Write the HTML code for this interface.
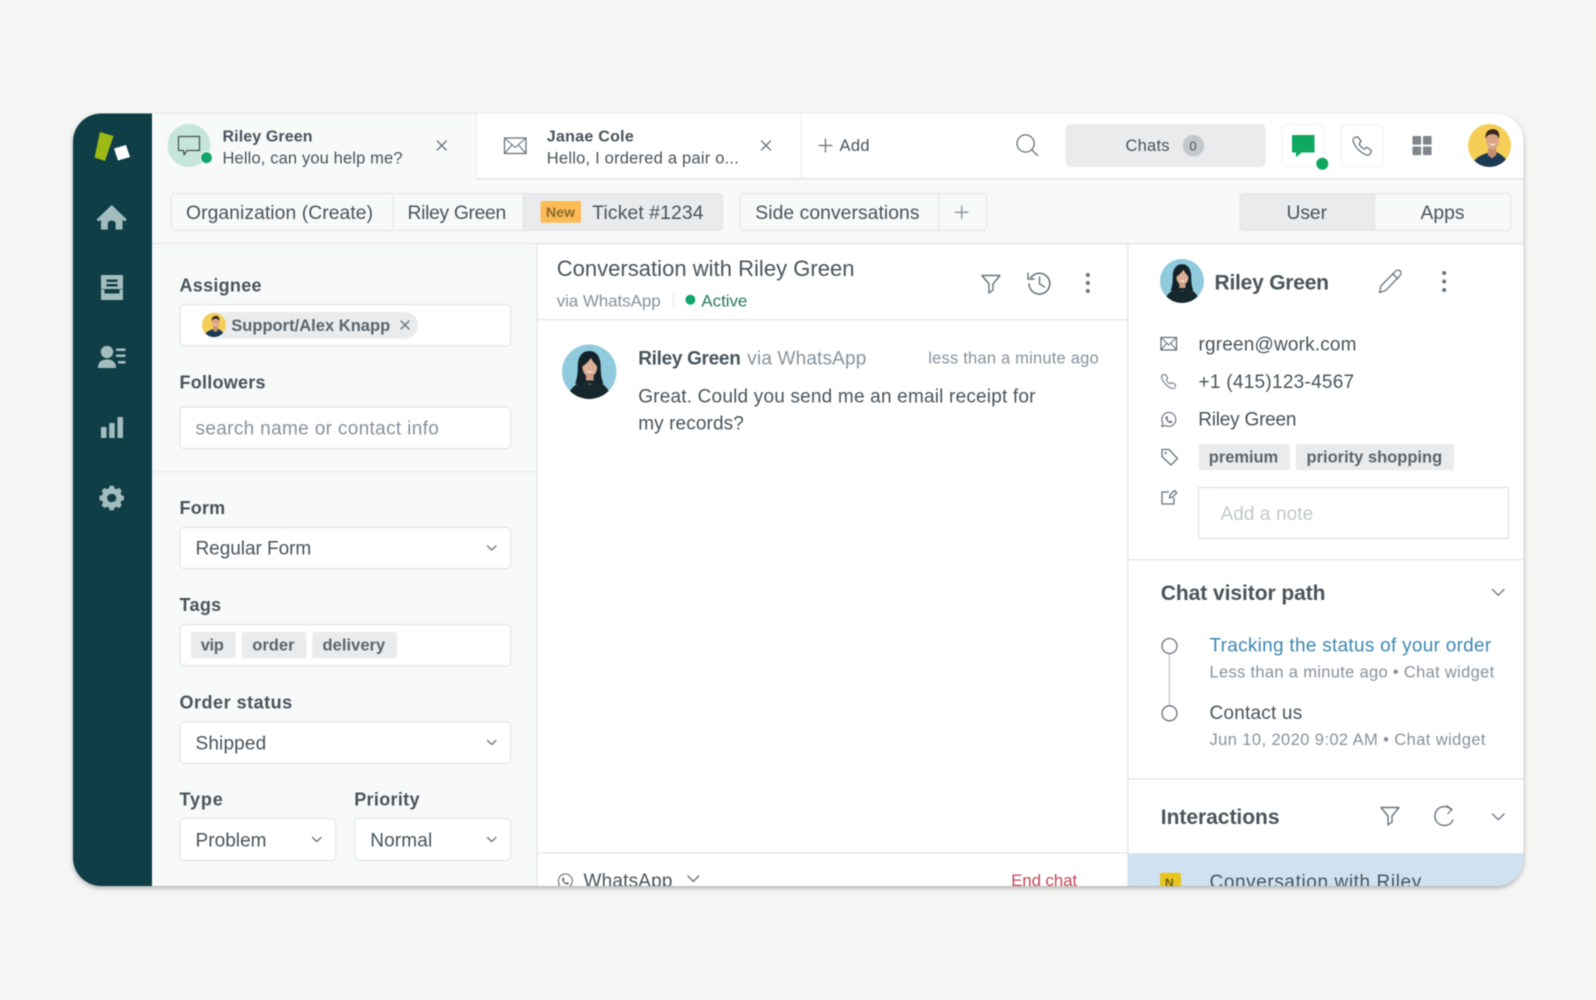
<!DOCTYPE html>
<html lang="en"><head><meta charset="utf-8"><title>Support workspace</title>
<style>
html,body{margin:0;padding:0;background:#f5f5f3;width:1596px;height:1000px;overflow:hidden}
svg{display:block;filter:blur(.4px)}
text{font-family:"Liberation Sans",Arial,sans-serif;fill:#49545c;white-space:pre;transform:translateX(-.5px)}
.b{font-weight:700}
.g{fill:#87929d}
.ln{fill:none;stroke:#68737d;stroke-width:1.3;stroke-linecap:round;stroke-linejoin:round}
.box{fill:#fff;stroke:#e3e5e6;stroke-width:1.2}
.ch{fill:none;stroke:#68737d;stroke-width:1.3;stroke-linecap:round;stroke-linejoin:round}
.nav{fill:#a3bdbf}
</style></head><body>
<svg width="1596" height="1000" viewBox="0 0 1596 1000" xmlns="http://www.w3.org/2000/svg">
<defs>
<clipPath id="card"><rect x="73" y="113.5" width="1450.5" height="772.5" rx="28"/></clipPath>
<clipPath id="av"><circle cx="50" cy="50" r="50"/></clipPath>
<filter id="sh" x="-5%" y="-5%" width="110%" height="110%"><feDropShadow dx="0" dy="2" stdDeviation="2.5" flood-color="#6d726e" flood-opacity=".55"/></filter>
<symbol id="woman" viewBox="0 0 100 100"><g clip-path="url(#av)">
<rect width="100" height="100" fill="#8fcbdc"/>
<path d="M50 12C36 12 29 24 29 40C29 52 28 62 24 72L76 72C72 62 71 52 71 40C71 24 64 12 50 12Z" fill="#15222a"/>
<ellipse cx="51" cy="42" rx="13.5" ry="17" fill="#dcae95"/>
<path d="M37 40C44 36 50 30 53 24C56 31 61 36 65 40L64 22L40 20Z" fill="#15222a"/>
<path d="M44 54L58 54L58 66L44 66Z" fill="#cf9f86"/>
<path d="M10 100C12 82 24 72 41 66L51 74L61 66C78 72 88 82 90 100Z" fill="#16282d"/>
<path d="M44 48Q51 55 58 48Q51 51 44 48Z" fill="#fff"/>
</g></symbol>
<symbol id="man" viewBox="0 0 100 100"><g clip-path="url(#av)">
<rect width="100" height="100" fill="#f5ce58"/>
<path d="M8 100C12 80 28 74 42 68L68 66C78 72 92 80 96 100Z" fill="#1d3a55"/>
<path d="M46 56L66 56L66 72L56 80L46 72Z" fill="#c69071"/>
<ellipse cx="57" cy="38" rx="15" ry="20" fill="#d9a585"/>
<path d="M41 34C39 18 48 11 60 12C70 13 75 22 72 34C69 26 64 23 54 24C48 24 44 27 41 34Z" fill="#3c2a20"/>
<path d="M49 45Q57 54 65 45Q57 48 49 45Z" fill="#fff"/>
</g></symbol>
<symbol id="phone" viewBox="0 0 24 24"><path d="M4.5 2.5L7.5 2L11 7L8.8 9.6C9.8 12 12 14.2 14.6 15.4L17 13.2L22 16.6L21.5 19.5C21 21.5 19 22.5 17 21.8C10.5 19.6 4.6 13.6 2.4 7C1.8 5 2.6 3.2 4.5 2.5Z" fill="none" stroke="#68737d" stroke-width="1.4" stroke-linejoin="round"/></symbol>
<symbol id="wa" viewBox="0 0 24 24"><path d="M2.5 22L4 16.8A9.8 9.8 0 1 1 7.6 20.4Z" fill="none" stroke="#68737d" stroke-width="1.6" stroke-linejoin="round"/><path d="M8.6 7.5L10.4 7.2L11.4 9.8L10.3 11.2C11 12.8 12.2 13.9 13.8 14.6L15.2 13.5L17.4 14.7L17 16.5C15.8 17.4 14 17.2 12 16C9.8 14.6 8.3 12.6 7.8 10.6C7.5 9.2 7.8 8.2 8.6 7.5Z" fill="#68737d"/></symbol>
<symbol id="funnel" viewBox="0 0 20 20"><path d="M1 1.5H19L12 10V16L8 19V10Z" fill="none" stroke="#68737d" stroke-width="1.4" stroke-linejoin="round"/></symbol>
</defs>

<rect width="1596" height="1000" fill="#f5f5f3"/>
<rect x="73" y="113.5" width="1450.5" height="772.5" rx="28" fill="#fff" filter="url(#sh)"/>
<g clip-path="url(#card)">
<rect x="73" y="113" width="1451" height="774" fill="#fff"/>
<!-- sidebar -->
<rect x="73" y="113" width="79" height="774" fill="#0f3e47"/>
<path d="M100 132L113.5 136L105 161L94.5 157.5Z" fill="#9dba14"/>
<path d="M114 148.5L126 145L130 157L118 160.5Z" fill="#fff"/>
<path class="nav" d="M111.7 205L126.8 219.5L124.8 221.5L122.5 219.7V229.5H115.6V222.5Q111.7 218.5 107.8 222.5V229.5H101V219.7L98.6 221.5L96.6 219.5Z"/>
<path class="nav" fill-rule="evenodd" d="M101 275H123V289H101ZM106.5 279.5V282H117.5V279.5ZM106.5 284V286.5H117.5V284Z"/>
<path class="nav" d="M101 289.5H104.5V293.5H119.5V289.5H123V300H101Z"/>
<circle class="nav" cx="107" cy="352" r="6.2"/>
<path class="nav" d="M98 368C98 361.5 102 359.5 107 359.5C112 359.5 116 361.5 116 368Z"/>
<path class="nav" d="M116 348.5H125.5V351H116ZM116 354.5H125.5V357H116ZM118 361H125.5V363.5H118Z"/>
<rect class="nav" x="101" y="427" width="5.5" height="11" rx=".8"/>
<rect class="nav" x="109.2" y="423" width="5.5" height="15" rx=".8"/>
<rect class="nav" x="117.5" y="417" width="5.5" height="21" rx=".8"/>
<path class="nav" fill-rule="evenodd" d="M109 486H114.4L115.2 489.3L118 490.5L121 488.7L124.7 492.4L122.9 495.3L124.1 498.2L127.4 499V504.3L124.1 505.1L122.9 508L124.7 510.9L121 514.6L118 512.8L115.2 514L114.4 517.3H109L108.2 514L105.4 512.8L102.4 514.6L98.7 510.9L100.5 508L99.3 505.1L96 504.3V499L99.3 498.2L100.5 495.3L98.7 492.4L102.4 488.7L105.4 490.5L108.2 489.3ZM111.7 496.5A5.2 5.2 0 1 0 111.8 506.8A5.2 5.2 0 1 0 111.7 496.5Z" transform="translate(111.7 498) scale(.78) translate(-111.7 -501.65)"/>

<!-- top bar -->
<rect x="152" y="113" width="324" height="65" fill="#f8f9f9"/>
<rect x="152" y="178" width="1372" height="65" fill="#f8f9f9"/>
<rect x="476" y="113" width="1" height="66" fill="#e9ebed"/>
<rect x="800.5" y="113" width="1" height="66" fill="#e9ebed"/>
<rect x="476" y="178" width="1048" height="1.5" fill="#e3e5e6"/>
<rect x="152" y="243" width="1372" height="1.5" fill="#e3e5e6"/>

<circle cx="189" cy="145.5" r="21.5" fill="#c6e6da"/>
<path d="M178.5 136.5H199.5V150.5H187L184 155L183.5 150.5H178.5Z" fill="none" stroke="#49545c" stroke-width="1.3" stroke-linejoin="round"/>
<circle cx="206.5" cy="157.7" r="6.5" fill="#f8f9f9"/>
<circle cx="206.5" cy="157.7" r="5.4" fill="#10a66a"/>
<text class="b" x="223" y="141.5" font-size="16" textLength="90">Riley Green</text>
<text x="223" y="163.5" font-size="16.5" textLength="180">Hello, can you help me?</text>
<path class="ln" d="M437.2 141L446.2 150M446.2 141L437.2 150"/>
<rect x="504.5" y="138" width="21.5" height="15.5" fill="none" stroke="#68737d" stroke-width="1.3"/>
<path class="ln" d="M504.5 138L515.2 147.5L526 138M504.5 153.5L512 145M526 153.5L518.5 145" style="stroke-width:1.1"/>
<text class="b" x="547.3" y="141.5" font-size="16" textLength="87">Janae Cole</text>
<text x="547.3" y="163.5" font-size="16.5" textLength="192">Hello, I ordered a pair o...</text>
<path class="ln" d="M761.5 141L770.5 150M770.5 141L761.5 150"/>
<path class="ln" d="M819 145.5H832M825.5 139V152"/>
<text x="840" y="151" font-size="16.5" textLength="30">Add</text>
<circle cx="1025.6" cy="143.5" r="8.6" fill="none" stroke="#68737d" stroke-width="1.3"/>
<path class="ln" d="M1032 150L1037.5 155.5"/>
<rect x="1065.5" y="124" width="200" height="43" rx="5" fill="#e9ebed"/>
<text x="1126" y="151" font-size="16.5" textLength="44">Chats</text>
<circle cx="1193.5" cy="145.6" r="10.7" fill="#c2c8cc"/>
<text x="1193.5" y="150.4" font-size="13" text-anchor="middle">0</text>
<rect x="1282" y="124.5" width="42.5" height="42" rx="5" fill="#fff" stroke="#eef0f0"/>
<path d="M1292 135H1314.5V152.5H1301.5L1296 157.5V152.5H1292Z" fill="#0fa860"/>
<circle cx="1322.3" cy="163.7" r="6" fill="#0fa860"/>
<rect x="1341.5" y="124.5" width="42" height="42" rx="5" fill="#fff" stroke="#eef0f0"/>
<use href="#phone" x="1351" y="135" width="22" height="22"/>
<rect x="1412.5" y="136" width="8.6" height="8.6" rx="1" fill="#7f878d"/><rect x="1423" y="136" width="8.6" height="8.6" rx="1" fill="#7f878d"/>
<rect x="1412.5" y="146.5" width="8.6" height="8.6" rx="1" fill="#7f878d"/><rect x="1423" y="146.5" width="8.6" height="8.6" rx="1" fill="#7f878d"/>
<use href="#man" x="1468" y="124" width="43" height="43"/>

<!-- second row -->
<rect x="171" y="193.5" width="551.5" height="37" rx="4" fill="#f8f9f9" stroke="#e3e5e6"/>
<path d="M523 193.5H718.5a4 4 0 0 1 4 4V226.5a4 4 0 0 1-4 4H523Z" fill="#e9ebed" stroke="#e3e5e6"/>
<rect x="392.5" y="193.5" width="1" height="37" fill="#e3e5e6"/>
<text x="186.5" y="219" font-size="19.3" textLength="187">Organization (Create)</text>
<text x="408" y="219" font-size="19.3" textLength="98.7">Riley Green</text>
<rect x="540.5" y="201" width="40.5" height="21.7" rx="2" fill="#fdbb55"/>
<text class="b" x="546.5" y="217" font-size="14" style="fill:#8a6a2c" textLength="29">New</text>
<text x="592.8" y="219" font-size="19.3" textLength="111.2">Ticket #1234</text>
<rect x="740" y="193.5" width="246.5" height="37" rx="4" fill="#f8f9f9" stroke="#e3e5e6"/>
<rect x="938" y="193.5" width="1" height="37" fill="#e3e5e6"/>
<text x="755.8" y="219" font-size="19.3" textLength="164.2">Side conversations</text>
<path d="M955 212.3H968.4M961.7 205.6V219" fill="none" stroke="#87929d" stroke-width="1.3"/>
<rect x="1240" y="193.5" width="270.7" height="37" rx="4" fill="#f8f9f9" stroke="#e3e5e6"/>
<path d="M1374.6 193.5H1244a4 4 0 0 0-4 4V226.5a4 4 0 0 0 4 4H1374.6Z" fill="#e9ebed" stroke="#e3e5e6"/>
<text x="1287" y="219" font-size="19.3" textLength="40.5">User</text>
<text x="1421" y="219" font-size="19.3" textLength="44">Apps</text>

<!-- left panel -->
<rect x="152" y="244" width="385" height="643" fill="#f8f9f9"/>
<rect x="536.5" y="244" width="1.3" height="643" fill="#e3e5e6"/>
<rect x="152" y="471" width="385" height="1.2" fill="#e9ebed"/>

<text class="b" x="180" y="291.5" font-size="18" textLength="82">Assignee</text>
<rect class="box" x="180" y="304.5" width="330.5" height="41.5" rx="4"/>
<rect x="202" y="312" width="216" height="26.7" rx="13.3" fill="#e9ebed"/>
<use href="#man" x="202" y="313" width="24" height="24"/>
<text class="b" x="231.7" y="331" font-size="16.5" textLength="159" style="fill:#5a656c">Support/Alex Knapp</text>
<path class="ln" d="M401 321L409 329M409 321L401 329"/>

<text class="b" x="180" y="388.5" font-size="18" textLength="86">Followers</text>
<rect class="box" x="180" y="407" width="330.5" height="41.5" rx="4"/>
<text class="g" x="196" y="434.5" font-size="19" textLength="243.3">search name or contact info</text>

<text class="b" x="180" y="514" font-size="18" textLength="45.7">Form</text>
<rect class="box" x="180" y="527.5" width="330.5" height="41" rx="4"/>
<text x="196" y="554.5" font-size="19" textLength="115.7">Regular Form</text>
<path class="ch" d="M487.5 546L491.7 550L496 546"/>

<text class="b" x="180" y="611" font-size="18" textLength="41.7">Tags</text>
<rect class="box" x="180" y="624.5" width="330.5" height="41.5" rx="4"/>
<rect x="190.7" y="632" width="45" height="26.3" rx="2.5" fill="#e9ebed"/>
<rect x="241.7" y="632" width="64.6" height="26.3" rx="2.5" fill="#e9ebed"/>
<rect x="312.3" y="632" width="84.7" height="26.3" rx="2.5" fill="#e9ebed"/>
<g style="font-size:16.5px"><text class="b" x="201.3" y="650.5" textLength="23" style="fill:#5a656c">vip</text>
<text class="b" x="252.7" y="650.5" textLength="42.3" style="fill:#5a656c">order</text>
<text class="b" x="323" y="650.5" textLength="62.7" style="fill:#5a656c">delivery</text></g>

<text class="b" x="180" y="708.5" font-size="18" textLength="112.7">Order status</text>
<rect class="box" x="180" y="722" width="330.5" height="41.3" rx="4"/>
<text x="196" y="749.5" font-size="19" textLength="70.7">Shipped</text>
<path class="ch" d="M487.5 740.5L491.7 744.5L496 740.5"/>

<text class="b" x="180" y="805.5" font-size="18" textLength="43.3">Type</text>
<text class="b" x="354.7" y="805.5" font-size="18" textLength="65.3">Priority</text>
<rect class="box" x="180" y="818.5" width="155.7" height="42" rx="4"/>
<rect class="box" x="354.7" y="818.5" width="156" height="42" rx="4"/>
<text x="196" y="846.5" font-size="19" textLength="71">Problem</text>
<text x="370.7" y="846.5" font-size="19" textLength="62">Normal</text>
<path class="ch" d="M312.5 837.5L316.7 841.5L321 837.5"/>
<path class="ch" d="M487.5 837.5L491.7 841.5L496 837.5"/>

<!-- center panel -->
<text x="557.2" y="276" font-size="22" textLength="297.8">Conversation with Riley Green</text>
<text class="g" x="557.2" y="306.5" font-size="17" textLength="104">via WhatsApp</text>
<rect x="673" y="292" width="1" height="16" fill="#e3e5e6"/>
<circle cx="690.4" cy="299.7" r="5" fill="#10a66a"/>
<text x="701.9" y="306.5" font-size="17" textLength="46" style="fill:#2b7a5a">Active</text>
<use href="#funnel" x="981" y="274" width="20" height="20"/>
<path d="M1031 277.5A10.4 10.4 0 1 1 1029 284" fill="none" stroke="#68737d" stroke-width="1.6" stroke-linecap="round"/>
<path d="M1028 272.5V279H1034.5" fill="none" stroke="#68737d" stroke-width="1.4"/>
<path d="M1039.5 277V284L1044.5 287" fill="none" stroke="#68737d" stroke-width="1.4" stroke-linecap="round"/>
<circle cx="1087.8" cy="275" r="2" fill="#68737d"/><circle cx="1087.8" cy="283" r="2" fill="#68737d"/><circle cx="1087.8" cy="291" r="2" fill="#68737d"/>
<rect x="537.5" y="319" width="590" height="1.3" fill="#e3e5e6"/>

<use href="#woman" x="562" y="344.5" width="54.5" height="54.5"/>
<text class="b" x="638.7" y="364.5" font-size="19" textLength="102.6">Riley Green</text>
<text class="g" x="747.8" y="364.5" font-size="19" textLength="119">via WhatsApp</text>
<text class="g" x="928.8" y="363.5" font-size="16.5" textLength="170.4">less than a minute ago</text>
<text x="638.7" y="402.5" font-size="19" textLength="397.3">Great. Could you send me an email receipt for</text>
<text x="638.7" y="429.5" font-size="19" textLength="105.6">my records?</text>

<rect x="537.5" y="852.3" width="590" height="1.3" fill="#e3e5e6"/>
<use href="#wa" x="556.5" y="872.5" width="17" height="17"/>
<text x="584" y="887" font-size="19" textLength="89">WhatsApp</text>
<path class="ch" d="M688 876L693.3 881.5L698.6 876"/>
<text x="1011.6" y="886" font-size="17" textLength="66" style="fill:#c8465c">End chat</text>

<!-- right panel -->
<rect x="1127.3" y="244" width="1.3" height="643" fill="#e3e5e6"/>
<use href="#woman" x="1160" y="259" width="44" height="44"/>
<text class="b" x="1215" y="289.5" font-size="21" textLength="114.5">Riley Green</text>
<path d="M1379.5 292.5L1381 286L1395.5 271.2C1397 269.8 1399 269.8 1400.2 271C1401.4 272.3 1401.3 274.2 1400 275.6L1385.5 290.6ZM1393 274L1398 279" fill="none" stroke="#68737d" stroke-width="1.3" stroke-linejoin="round"/>
<circle cx="1444.2" cy="273" r="2" fill="#68737d"/><circle cx="1444.2" cy="281.5" r="2" fill="#68737d"/><circle cx="1444.2" cy="290" r="2" fill="#68737d"/>

<rect x="1161" y="337.5" width="15.5" height="12.5" fill="none" stroke="#68737d" stroke-width="1.3"/>
<path d="M1161 337.5L1168.7 345L1176.5 337.5M1161 350L1166.5 343.5M1176.5 350L1171 343.5" fill="none" stroke="#68737d" stroke-width="1"/>
<text x="1199" y="350.3" font-size="19" textLength="158">rgreen@work.com</text>
<use href="#phone" x="1160" y="373" width="17" height="17"/>
<text x="1199" y="388" font-size="19" textLength="155.7">+1 (415)123-4567</text>
<use href="#wa" x="1160" y="411" width="17" height="17"/>
<text x="1198.7" y="425.5" font-size="19" textLength="98.3">Riley Green</text>
<path d="M1162 449.5H1169L1177.5 458.5L1171 465L1162 456.5Z" fill="none" stroke="#68737d" stroke-width="1.3" stroke-linejoin="round"/>
<circle cx="1165.7" cy="453" r="1.1" fill="#68737d"/>
<rect x="1198.7" y="444" width="91.3" height="26.3" rx="2.5" fill="#e9ebed"/>
<rect x="1296" y="444" width="158.3" height="26.3" rx="2.5" fill="#e9ebed"/>
<text class="b" x="1209.3" y="462.5" font-size="16.5" textLength="69.4" style="fill:#5a656c">premium</text>
<text class="b" x="1307" y="462.5" font-size="16.5" textLength="135.7" style="fill:#5a656c">priority shopping</text>
<path d="M1174 497.5V504H1162V492H1169M1169.5 498L1170 495L1174.5 490.5L1176.8 492.8L1172.2 497.3Z" fill="none" stroke="#68737d" stroke-width="1.3" stroke-linejoin="round"/>
<rect x="1198.5" y="487.5" width="310" height="51" fill="#fff" stroke="#dfe1e2" stroke-width="1.2" rx="1"/>
<text x="1221" y="520" font-size="19" textLength="92.7" style="fill:#c2c8cc">Add a note</text>

<rect x="1128" y="559" width="396" height="1.3" fill="#e3e5e6"/>
<text class="b" x="1161.3" y="600" font-size="21" textLength="164.7">Chat visitor path</text>
<path class="ch" d="M1492.5 589.5L1498.3 595.2L1504 589.5"/>
<rect x="1168.7" y="654" width="1.3" height="51" fill="#c2c8cc"/>
<circle cx="1169.5" cy="646" r="7.5" fill="#fff" stroke="#68737d" stroke-width="1.3"/>
<circle cx="1169.5" cy="713.3" r="7.5" fill="#fff" stroke="#68737d" stroke-width="1.3"/>
<text x="1210" y="651.5" font-size="19" textLength="281.7" style="fill:#3f88b2">Tracking the status of your order</text>
<text class="g" x="1210" y="677.5" font-size="16.5" textLength="284.7">Less than a minute ago • Chat widget</text>
<text x="1210" y="719" font-size="19" textLength="92.7">Contact us</text>
<text class="g" x="1210" y="745" font-size="16.5" textLength="276">Jun 10, 2020 9:02 AM • Chat widget</text>

<rect x="1128" y="778.3" width="396" height="1.3" fill="#e3e5e6"/>
<text class="b" x="1161.3" y="824" font-size="21" textLength="118.7">Interactions</text>
<use href="#funnel" x="1380" y="806" width="20" height="20"/>
<path d="M1451.5 809.8A9.5 9.5 0 1 0 1453 820" fill="none" stroke="#68737d" stroke-width="1.4" stroke-linecap="round"/>
<path d="M1446.5 805.5L1452 809.5L1447.5 814" fill="none" stroke="#68737d" stroke-width="1.2"/>
<path class="ch" d="M1492.5 814L1498.3 819.7L1504 814"/>
<rect x="1127.5" y="853.3" width="397" height="34" fill="#cfe2f1"/>
<rect x="1160" y="872.7" width="21" height="20" rx="2" fill="#e8c61c"/>
<text class="b" x="1165.5" y="887" font-size="12" textLength="9.5" style="fill:#6f5f10">N</text>
<text x="1210" y="888" font-size="19" textLength="211.7">Conversation with Riley</text>
</g>
</svg>
</body></html>
